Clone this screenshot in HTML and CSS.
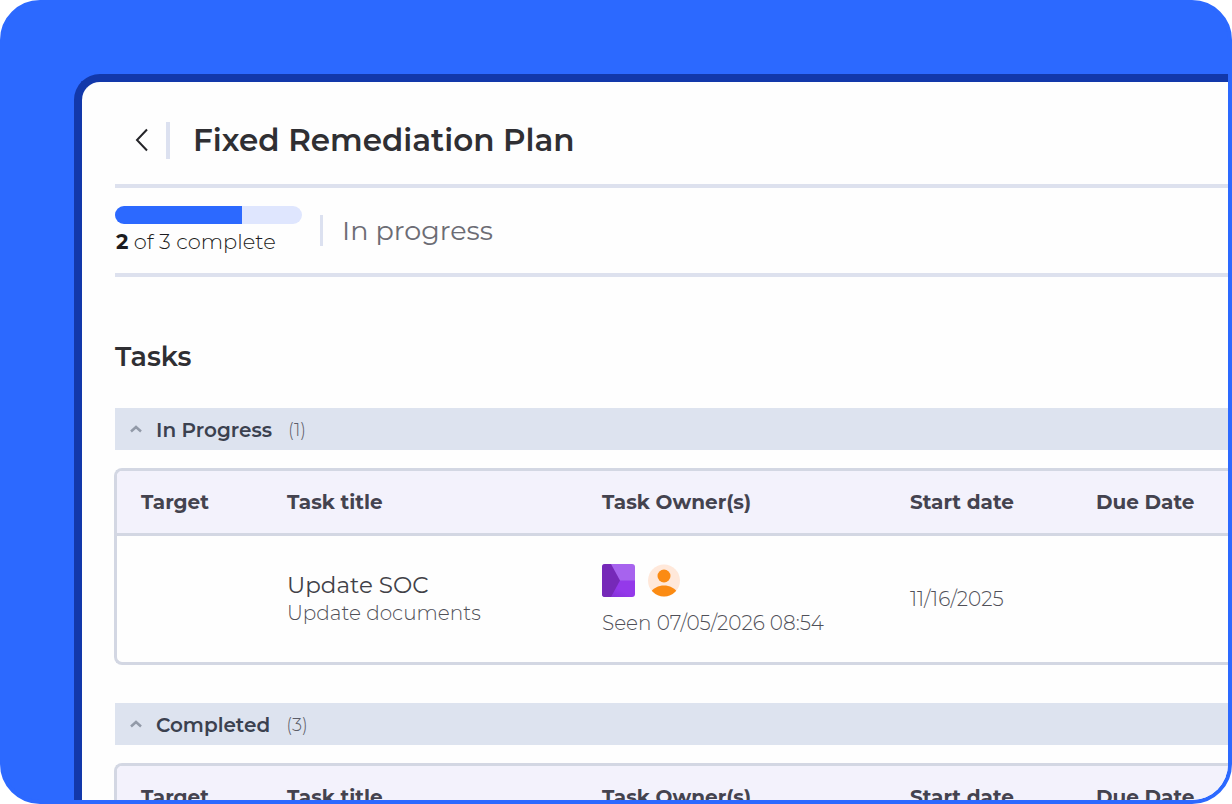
FILE: index.html
```html
<!DOCTYPE html>
<html lang="en">
<head>
<meta charset="utf-8">
<meta name="viewport" content="width=device-width, initial-scale=1">
<title>Fixed Remediation Plan</title>
<link rel="stylesheet" href="styles.css">
</head>
<body>
<div class="stage">
  <main class="panel">
    <header class="plan-header">
      <button class="back" type="button" aria-label="Back">
        <svg viewBox="0 0 14 24" width="14" height="24" aria-hidden="true"><path d="M12 1.500 2 12l10 10.500"/></svg>
      </button>
      <h1 class="plan-title">Fixed Remediation Plan</h1>
    </header>

    <section class="status">
      <div class="progress">
        <div class="progress-track" role="progressbar" aria-label="Tasks complete" aria-valuemin="0" aria-valuemax="3" aria-valuenow="2">
          <div class="progress-fill" style="width: 68%"></div>
        </div>
        <p class="progress-label"><strong>2</strong> of 3 complete</p>
      </div>
      <p class="status-text">In progress</p>
    </section>

    <h2 class="tasks-title">Tasks</h2>

    <section class="group">
      <button class="group-bar" type="button" aria-expanded="true">
        <svg class="chevron" viewBox="0 0 12 10" width="12" height="10" aria-hidden="true"><path d="M1 6.500 6 2l5 4.500"/></svg>
        <span class="group-name">In Progress</span>
        <span class="group-count">(1)</span>
      </button>
      <div class="table-frame">
        <table class="tasks">
          <colgroup><col class="col-target"><col class="col-task"><col class="col-owner"><col class="col-start"><col></colgroup>
          <thead>
            <tr><th scope="col">Target</th><th scope="col">Task title</th><th scope="col">Task Owner(s)</th><th scope="col">Start date</th><th scope="col">Due Date</th></tr>
          </thead>
          <tbody>
            <tr>
              <td></td>
              <td>
                <p class="task-name">Update SOC</p>
                <p class="task-note">Update documents</p>
              </td>
              <td>
                <div class="owners">
                  <svg viewBox="0 0 33 33" width="33" height="33" aria-hidden="true">
                    <defs>
                      <clipPath id="tile"><rect width="33" height="33" rx="3"/></clipPath>
                      <linearGradient id="low" x1="0" y1="1" x2="1" y2="0"><stop offset="0" stop-color="#7f2fd0"/><stop offset=".5" stop-color="#9439ea"/></linearGradient>
                    </defs>
                    <g clip-path="url(#tile)">
                      <path fill="#a763ee" d="M0 0h33v17H0z"/>
                      <path fill="url(#low)" d="M0 16.500h33V33H0z"/>
                      <path fill="#7629b8" d="M0 0h9l9 16.500L9 33H0z"/>
                    </g>
                  </svg>
                  <svg viewBox="0 0 32 33" width="32" height="33" aria-hidden="true">
                    <clipPath id="avatar"><circle cx="16" cy="16.500" r="16"/></clipPath>
                    <g clip-path="url(#avatar)">
                      <path fill="#ffe8da" d="M0 0h32v33H0z"/>
                      <circle cx="16" cy="12" r="6.500" fill="#fb8b13"/>
                      <path fill="#fb8b13" d="M2 29C8 19 24 19 30 29v5H2z"/>
                    </g>
                  </svg>
                </div>
                <p class="seen">Seen 07/05/2026 08:54</p>
              </td>
              <td class="date">11/16/2025</td>
              <td></td>
            </tr>
          </tbody>
        </table>
      </div>
    </section>

    <section class="group">
      <button class="group-bar" type="button" aria-expanded="true">
        <svg class="chevron" viewBox="0 0 12 10" width="12" height="10" aria-hidden="true"><path d="M1 6.500 6 2l5 4.500"/></svg>
        <span class="group-name">Completed</span>
        <span class="group-count">(3)</span>
      </button>
      <div class="table-frame">
        <table class="tasks">
          <colgroup><col class="col-target"><col class="col-task"><col class="col-owner"><col class="col-start"><col></colgroup>
          <thead>
            <tr><th scope="col">Target</th><th scope="col">Task title</th><th scope="col">Task Owner(s)</th><th scope="col">Start date</th><th scope="col">Due Date</th></tr>
          </thead>
        </table>
      </div>
    </section>
  </main>
</div>
</body>
</html>
```

FILE: styles.css
```css
* { box-sizing: border-box; }

body {
  margin: 0;
  background: #fff;
  color: #2f2f33;
  font-family: Montserrat, Inter, "Open Sans", sans-serif;
}

h1, h2, p { margin: 0; }

button {
  border: 0;
  background: none;
  color: inherit;
  font: inherit;
  cursor: pointer;
}

.stage {
  display: flex;
  height: 100vh;
  padding: 70px 0 0 70px;
  overflow: hidden;
  border: 4px solid #2c69ff;
  border-radius: 40px;
  background: #2c69ff;
}

.panel {
  flex: 1;
  min-width: 0;
  padding-left: 32px;
  border: solid #1238aa;
  border-width: 8px 0 0 8px;
  border-top-left-radius: 26px;
  background: #fefefe;
}

.plan-header {
  display: flex;
  align-items: center;
  height: 106px;
  margin-left: 1px;
  padding: 14px 0 0 17px;
  border-bottom: 4px solid #dde1ee;
}

.back {
  display: flex;
  align-items: center;
  height: 37px;
  padding: 0 17px 0 3px;
  border-right: 4px solid #dce1f0;
}

.back path {
  fill: none;
  stroke: #252529;
  stroke-width: 2;
}

.plan-title {
  padding-left: 23px;
  font-size: 31px;
  font-weight: 600;
  line-height: 40px;
}

.status {
  display: flex;
  align-items: center;
  gap: 18px;
  height: 89px;
  margin-left: 1px;
  border-bottom: 4px solid #dde1ee;
}

.progress { width: 187px; }

.progress-track {
  height: 18px;
  overflow: hidden;
  border-radius: 9px;
  background: #dfe6fe;
}

.progress-fill {
  height: 100%;
  background: #2c69ff;
}

.progress-label {
  padding: 4px 0 0 1px;
  color: #1c1c20;
  font-size: 21px;
  font-weight: 300;
  line-height: 28px;
}

.progress-label strong { font-weight: 700; }

.status-text {
  padding-left: 19px;
  border-left: 3px solid #dce1f0;
  color: #6c6c74;
  font-size: 27px;
  font-weight: 400;
  line-height: 31px;
}

.tasks-title {
  padding: 62px 0 33px 1px;
  font-size: 27px;
  font-weight: 600;
  line-height: 36px;
}

.group { margin-bottom: 38px; }

.group-bar {
  display: flex;
  align-items: center;
  width: calc(100% - 1px);
  height: 42px;
  margin: 0 0 18px 1px;
  padding: 2px 15px 0;
  background: #dde3ef;
  text-align: left;
}

.chevron path {
  fill: none;
  stroke: #929aa8;
  stroke-width: 2.5;
}

.group-name {
  margin: 0 16px 0 14px;
  color: #3b414f;
  font-size: 20px;
  font-weight: 600;
}

.group-count {
  color: #5c5d68;
  font-size: 18px;
  font-weight: 300;
}

.table-frame {
  overflow: hidden;
  border: 3px solid #d3d7e3;
  border-right: 0;
  border-radius: 8px 0 0 8px;
}

.tasks {
  width: 100%;
  border-spacing: 0;
  table-layout: fixed;
}

.col-target { width: 146px; }
.col-task { width: 315px; }
.col-owner { width: 308px; }
.col-start { width: 186px; }

.tasks th {
  height: 65px;
  padding: 0 0 0 24px;
  border-bottom: 3px solid #d3d7e3;
  background: #f3f2fc;
  color: #44434f;
  font-size: 20px;
  font-weight: 700;
  text-align: left;
}

.tasks td {
  height: 126px;
  padding: 0 0 0 24px;
  color: #505058;
  font-size: 20px;
  font-weight: 300;
  line-height: 28px;
}

.tasks .task-name {
  color: #414147;
  font-size: 23px;
  font-weight: 400;
}

.owners {
  display: flex;
  gap: 13px;
  padding-top: 2px;
  margin-bottom: 12px;
}
```
